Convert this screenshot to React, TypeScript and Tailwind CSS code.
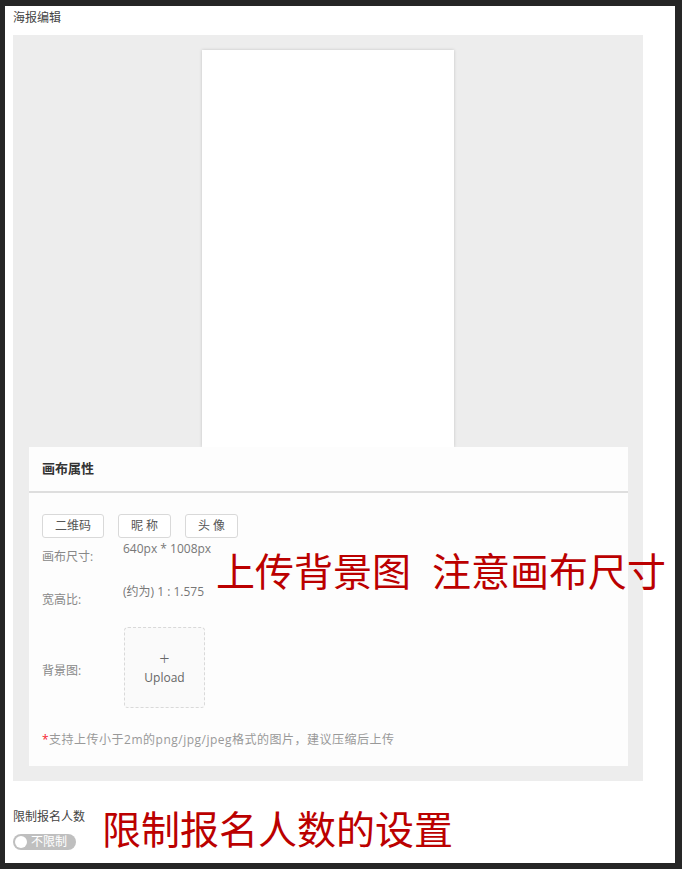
import React from "react";

const font = { fontFamily: '"Open Sans", "Noto Sans CJK SC", sans-serif' };

export default function App() {
  return (
    <div className="w-[682px] h-[869px] bg-[#262626] pt-[6px] pl-[5px]" style={font}>
      <div className="relative w-[670px] h-[857px] bg-white pl-[8px] pt-[5px]">
        <div className="text-[12px] leading-[14px] text-[#444]">海报编辑</div>
        <div className="w-[630px] mt-[10px] bg-[#ededed] pt-[15px] pb-[15px] flex flex-col items-center">
          <div className="w-[252px] h-[397px] bg-white shadow-[0_0_3px_rgba(0,0,0,0.18)]" />
          <div className="self-start ml-[16px] w-[599px] bg-[#fdfdfd]">
            <div className="h-[46px] border-b-2 border-[#dedede] flex items-center pl-[13px] text-[13px] font-bold text-[#333]">
              画布属性
            </div>
            <div className="pl-[13px] pt-[21px] pb-[18px]">
              <div className="flex gap-[14px]">
                <div className="w-[62px] h-[24px] border border-[#d9d9d9] rounded-[3px] bg-white flex items-center justify-center text-[12px] text-[#555]">二维码</div>
                <div className="w-[53px] h-[24px] border border-[#d9d9d9] rounded-[3px] bg-white flex items-center justify-center text-[12px] text-[#555] tracking-[3px] pl-[3px]">昵称</div>
                <div className="w-[53px] h-[24px] border border-[#d9d9d9] rounded-[3px] bg-white flex items-center justify-center text-[12px] text-[#555] tracking-[3px] pl-[3px]">头像</div>
              </div>
              <div className="flex mt-[3px] h-[43px]">
                <div className="w-[81px] mt-[8px] text-[12px] leading-[16px] text-[#888]">画布尺寸:</div>
                <div className="text-[12px] leading-[16px] text-[#777]">640px * 1008px</div>
              </div>
              <div className="flex h-[43px]">
                <div className="w-[81px] mt-[8px] text-[12px] leading-[16px] text-[#888]">宽高比:</div>
                <div className="text-[12px] leading-[16px] text-[#777]">(约为) 1 : 1.575</div>
              </div>
              <div className="flex items-center">
                <div className="w-[82px] mt-[7px] text-[12px] leading-[16px] text-[#888]">背景图:</div>
                <div className="w-[81px] h-[81px] border border-dashed border-[#d9d9d9] rounded-[4px] bg-[#fafafa] flex flex-col items-center justify-center">
                  <div className="text-[18px] leading-[18px] text-[#666] font-light">+</div>
                  <div className="text-[12px] leading-[18px] text-[#666] mt-[2px]">Upload</div>
                </div>
              </div>
              <div className="mt-[24px] text-[12px] leading-[16px] text-[#999] tracking-[0.5px]">
                <span className="text-[#f5222d]">*</span>支持上传小于2m的png/jpg/jpeg格式的图片，建议压缩后上传
              </div>
            </div>
          </div>
        </div>
        <div className="mt-[28px] text-[12px] leading-[16px] text-[#444]">限制报名人数</div>
        <div className="mt-[9px] w-[63px] h-[16px] rounded-full bg-[#bfbfbf] flex items-center pl-[2px]">
          <div className="w-[12px] h-[12px] rounded-full bg-white" />
          <div className="ml-[4px] text-[12px] leading-[16px] text-white">不限制</div>
        </div>

        <div className="absolute left-[211px] top-[538px] flex gap-[21px] text-[39px] leading-[50px] text-[#bb0000]" style={{ fontFamily: '"Noto Sans CJK SC", sans-serif' }}>
          <span>上传背景图</span>
          <span>注意画布尺寸</span>
        </div>
        <div className="absolute left-[97px] top-[796px] text-[39px] leading-[50px] text-[#bb0000]" style={{ fontFamily: '"Noto Sans CJK SC", sans-serif' }}>
          限制报名人数的设置
        </div>
      </div>
    </div>
  );
}
